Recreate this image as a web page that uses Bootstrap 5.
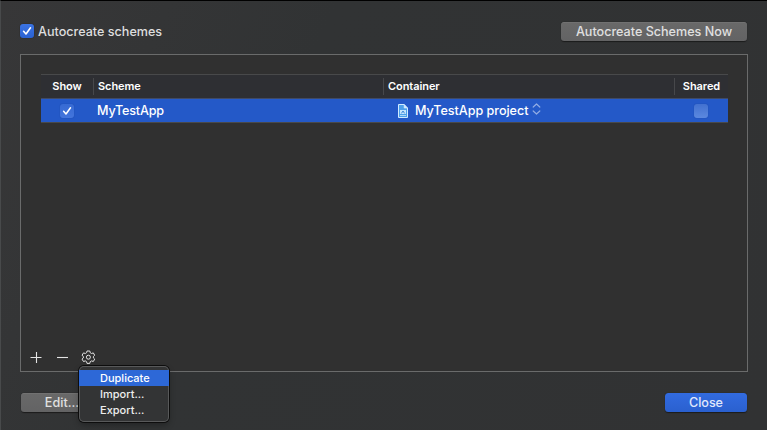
<!DOCTYPE html>
<html lang="en">
<head>
<meta charset="utf-8">
<title>Manage Schemes</title>
<link href="https://cdn.jsdelivr.net/npm/bootstrap@5.3.0/dist/css/bootstrap.min.css" rel="stylesheet">
<style>
body{background:#313233;color:#dededf;font-family:Inter,"Liberation Sans",sans-serif;font-size:12.6px;font-weight:500;line-height:20px;overflow:hidden}
.sheet{width:767px;height:430px;border-top:1px solid #000;border-left:1px solid #484a4b;padding:20px 19px 0 19px;background:linear-gradient(115deg,#373738 0,#313334 35%,#313233 100%)}
.sheet svg{display:block;flex:none}
.tick{width:14px;height:14px;border-radius:3px;background:linear-gradient(#3b73e2,#2a62d2);box-shadow:0 0 1px #111}
.auto-label{height:20px;padding-top:1px;letter-spacing:0}
.mac-btn{height:19px;padding:0;border:0;border-radius:3.5px;font-size:12.6px;font-weight:500;line-height:19px;color:#e0e0e0;background:linear-gradient(#696969,#636364);box-shadow:0 .5px 1px #1b1b1b,inset 0 .5px #7b7b7b}
.now-btn{width:186px;margin:1px 1px 0 0;letter-spacing:0}
.edit-btn{width:82px;margin-left:1px}
.close-btn{width:82px;margin-right:1px;letter-spacing:-.05px;color:#e0e8fb;background:linear-gradient(#326be0,#2a60cf);box-shadow:0 .5px 1px #1b1b1b}
.pane{width:728px;height:318px;margin-top:13px;border:1px solid #6a6b6b;background:#303030;padding:19px 19px 0 20px}
.scheme-grid{width:687px}
.grid-line{display:grid;grid-template-columns:52px 290px 291px 54px}
.heads{height:24px;border-top:1px solid #48494a;background:#2e2f33;color:#fff;font-size:11px;font-weight:600;line-height:17px;padding-top:3px;letter-spacing:-.07px}
.heads > div{height:17px}
.heads > div + div{border-left:1px solid #47484b;padding-left:4px}
.entry{height:25px;border-top:1px solid #3f4a66;border-bottom:1px solid #49494a;background:#2459c8;color:#fff;line-height:23px;letter-spacing:-.2px}
.row-tick{background:linear-gradient(#376ad3,#4375dc);box-shadow:0 0 1px #173c8c}
.row-off{background:linear-gradient(#4271d0,#5b88df);box-shadow:0 0 1px #173c8c}
.doc-icon{margin-left:15px;margin-right:7px}
.project{letter-spacing:-.04px}
.tools{margin-top:227px;margin-left:-12px;gap:12px;color:#e4e4e4}
.foot{margin-top:21px}
.pop{left:79px;top:366px;width:90px;height:56px;padding-top:4px;border-radius:5px;background:#333435;box-shadow:0 0 0 1px #0d0d0d,inset 0 0 0 1px #58595a,0 3px 6px rgba(0,0,0,.3);font-size:11px;font-weight:500;color:#eee}
.pop div{height:16px;line-height:16px;padding-left:21px}
.pop .on{background:#2d68d7;color:#fff}
</style>
<script src="https://cdn.jsdelivr.net/npm/bootstrap@5.3.0/dist/js/bootstrap.bundle.min.js"></script>
</head>
<body>
<main class="sheet position-relative">
  <div class="d-flex justify-content-between align-items-start">
    <label class="d-flex align-items-center"><span class="tick d-block"><svg width="14" height="14" viewBox="0 0 14 14" fill="none" stroke="#fff" stroke-width="1.6" stroke-linecap="round" stroke-linejoin="round"><path d="M3.6 7.3 6 10l4.5-6.2"/></svg></span><span class="auto-label ms-1">Autocreate schemes</span></label>
    <button class="btn mac-btn now-btn">Autocreate Schemes Now</button>
  </div>
  <section class="pane">
    <div class="scheme-grid">
      <div class="grid-line heads">
        <div class="text-center">Show</div><div>Scheme</div><div>Container</div><div class="text-center ps-0">Shared</div>
      </div>
      <div class="grid-line entry align-items-center">
        <div class="d-flex justify-content-center"><span class="tick row-tick d-block"><svg width="14" height="14" viewBox="0 0 14 14" fill="none" stroke="#fff" stroke-width="1.5" stroke-linecap="round" stroke-linejoin="round"><path d="M3.6 7.3 6 10l4.5-6.2"/></svg></span></div>
        <div class="ps-1">MyTestApp</div>
        <div class="d-flex align-items-center">
          <svg class="doc-icon" width="10" height="14" viewBox="0 0 10 14"><path d="M.5.5h5.7L9.5 4v9.5h-9z" fill="#4da0ea" stroke="#d2ebff"/><path d="M6.2.5V4h3.3" fill="#d6edff" stroke="#d2ebff" stroke-width=".7"/><path d="M2 6h6v4H2z" fill="#c5e5fd"/><path d="M3.4 9.4 5 7l1.6 2.4" fill="none" stroke="#2a78d2" stroke-width=".9"/><path d="M2 11.5h6" stroke="#c5e5fd" stroke-width=".8"/></svg>
          <span class="project">MyTestApp project</span>
          <svg class="ms-1 mb-1" width="9" height="12" viewBox="0 0 9 12" fill="none" stroke="#91ace4" stroke-width="1.2" stroke-linecap="round" stroke-linejoin="round"><path d="m1.2 4 3.3-3 3.3 3M1.2 8l3.3 3 3.3-3"/></svg>
        </div>
        <div class="d-flex justify-content-center"><span class="tick row-off d-block"></span></div>
      </div>
    </div>
    <div class="tools d-flex align-items-center">
      <svg width="14" height="14" viewBox="0 0 14 14" stroke="currentColor" stroke-width="1.1"><path d="M1.5 7.5h11M7.5 2v11"/></svg>
      <svg width="14" height="14" viewBox="0 0 14 14" stroke="currentColor" stroke-width="1.1"><path d="M2 7.5h11"/></svg>
      <svg width="14" height="14" viewBox="0 0 14 14" fill="none" stroke="currentColor" stroke-width="1" stroke-linejoin="round"><path d="M6 1h2.8l.4 1.7 1.3.8 1.8-.6 1.4 2.4-1.3 1.2v1.4l1.3 1.2-1.4 2.4-1.8-.6-1.3.8-.4 1.7H6l-.4-1.7-1.3-.8-1.8.6L1 9.1l1.4-1.2V6.5L1 5.3l1.5-2.4 1.8.6 1.3-.8z"/><circle cx="7.4" cy="7.2" r="2"/></svg>
    </div>
  </section>
  <footer class="foot d-flex justify-content-between">
    <button class="btn mac-btn edit-btn">Edit...</button>
    <button class="btn mac-btn close-btn">Close</button>
  </footer>
</main>
<div class="pop position-absolute"><div class="on">Duplicate</div><div>Import...</div><div>Export...</div></div>
</body>
</html>
